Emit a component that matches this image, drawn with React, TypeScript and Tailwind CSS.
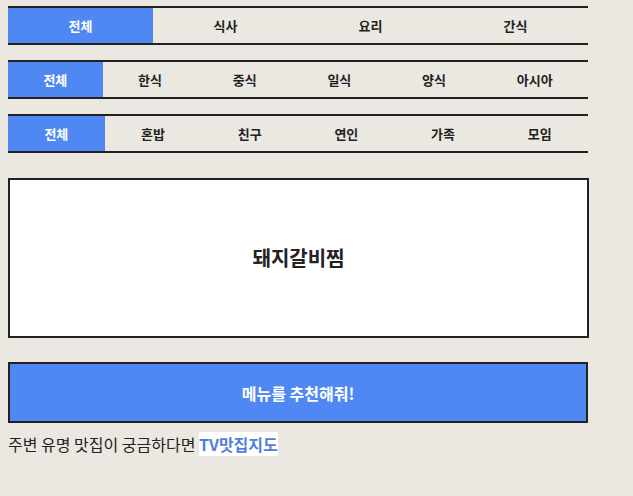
import React, { useState } from "react";

const font = { fontFamily: '"Noto Sans CJK KR", "Noto Sans", sans-serif' };

function TabRow({ items, active, onPick }: { items: string[]; active: number; onPick: (i: number) => void }) {
  return (
    <div className="flex h-[39px] border-y-2 border-[#222222]">
      {items.map((t, i) => (
        <button
          key={t}
          onClick={() => onPick(i)}
          className={
            i === active
              ? "flex-auto flex items-center justify-center bg-[#4f88f2] text-white text-[13px] font-bold"
              : "flex-auto flex items-center justify-center text-[#222222] text-[13px] font-bold"
          }
        >
          {t}
        </button>
      ))}
    </div>
  );
}

export default function App() {
  const [a, setA] = useState(0);
  const [b, setB] = useState(0);
  const [c, setC] = useState(0);
  return (
    <div className="min-h-[496px] w-full bg-[#ebe7e1]" style={font}>
      <div className="w-[580px] ml-2 pt-[6px] flex flex-col">
        <div className="flex flex-col gap-[15px]">
          <TabRow items={["전체", "식사", "요리", "간식"]} active={a} onPick={setA} />
          <TabRow items={["전체", "한식", "중식", "일식", "양식", "아시아"]} active={b} onPick={setB} />
          <TabRow items={["전체", "혼밥", "친구", "연인", "가족", "모임"]} active={c} onPick={setC} />
        </div>
        <div className="mt-[25px] h-[160px] w-[581px] border-2 border-[#222222] bg-white flex items-center justify-center">
          <span className="text-[20px] font-bold text-[#222222]">돼지갈비찜</span>
        </div>
        <button className="mt-[24px] h-[61px] border-2 border-[#222222] bg-[#4f88f2] flex items-center justify-center text-white text-[16px] font-bold">
          메뉴를 추천해줘!
        </button>
        <div className="mt-[9px] text-[16px] text-[#222222] leading-[24px]">
          주변 유명 맛집이 궁금하다면{" "}
          <a className="bg-white font-bold text-[#4f80dc]">TV맛집지도</a>
        </div>
      </div>
    </div>
  );
}
